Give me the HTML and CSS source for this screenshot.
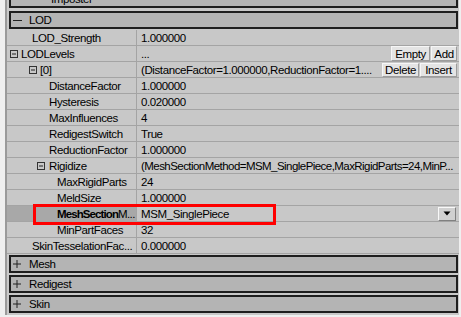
FILE: index.html
```html
<!DOCTYPE html>
<html>
<head>
<meta charset="utf-8">
<link rel="stylesheet" href="styles.css">
</head>
<body>
<div class="window">
  <div class="panel">
    <div class="cat cat-cut"><span class="cat-text">Imposter</span></div>
    <div class="cat cat-lod">
      <svg class="cat-icon" width="10" height="9" viewBox="0 0 10 9"><line x1="1" y1="4.5" x2="10" y2="4.5" stroke="#222" stroke-width="1"/></svg>
      <span class="cat-text">LOD</span>
    </div>
    <div class="rows">
      <div class="row"><div class="name i1">LOD_Strength</div><div class="value">1.000000</div></div>
      <div class="row"><div class="name e1"><svg class="box" width="8" height="8" viewBox="0 0 8 8"><rect x="0.5" y="0.5" width="7" height="7" fill="none" stroke="#333"/><line x1="2" y1="4" x2="6" y2="4" stroke="#222"/></svg>LODLevels</div><div class="value"><span>...</span><span class="btns top"><span class="btn b-empty">Empty</span><span class="btn b-add">Add</span></span></div></div>
      <div class="row"><div class="name e2"><svg class="box" width="8" height="8" viewBox="0 0 8 8"><rect x="0.5" y="0.5" width="7" height="7" fill="none" stroke="#333"/><line x1="2" y1="4" x2="6" y2="4" stroke="#222"/></svg>[0]</div><div class="value"><span>(DistanceFactor=1.000000,ReductionFactor=1....</span><span class="btns bottom"><span class="btn b-delete">Delete</span><span class="btn b-insert">Insert</span></span></div></div>
      <div class="row"><div class="name i2">DistanceFactor</div><div class="value">1.000000</div></div>
      <div class="row"><div class="name i2">Hysteresis</div><div class="value">0.020000</div></div>
      <div class="row"><div class="name i2">MaxInfluences</div><div class="value">4</div></div>
      <div class="row"><div class="name i2">RedigestSwitch</div><div class="value">True</div></div>
      <div class="row"><div class="name i2">ReductionFactor</div><div class="value">1.000000</div></div>
      <div class="row"><div class="name e3"><svg class="box" width="8" height="8" viewBox="0 0 8 8"><rect x="0.5" y="0.5" width="7" height="7" fill="none" stroke="#333"/><line x1="2" y1="4" x2="6" y2="4" stroke="#222"/></svg>Rigidize</div><div class="value"><span class="tight">(MeshSectionMethod=MSM_SinglePiece,MaxRigidParts=24,MinP...</span></div></div>
      <div class="row"><div class="name i3">MaxRigidParts</div><div class="value">24</div></div>
      <div class="row"><div class="name i3">MeldSize</div><div class="value">1.000000</div></div>
      <div class="row selected"><div class="name i3"><b>MeshSection</b>M...</div><div class="value"><span>MSM_SinglePiece</span><span class="drop"><svg width="8" height="5" viewBox="0 0 8 5"><polygon points="0.5,0.5 7.5,0.5 4,4.5" fill="#000"/></svg></span></div></div>
      <div class="row"><div class="name i3">MinPartFaces</div><div class="value">32</div></div>
      <div class="row"><div class="name i1">SkinTesselationFac...</div><div class="value">0.000000</div></div>
    </div>
    <div class="cat cat-first">
      <svg class="cat-icon" width="10" height="10" viewBox="0 0 10 10"><line x1="1" y1="5" x2="9" y2="5" stroke="#222"/><line x1="5" y1="1" x2="5" y2="9" stroke="#222"/></svg>
      <span class="cat-text">Mesh</span>
    </div>
    <div class="cat">
      <svg class="cat-icon" width="10" height="10" viewBox="0 0 10 10"><line x1="1" y1="5" x2="9" y2="5" stroke="#222"/><line x1="5" y1="1" x2="5" y2="9" stroke="#222"/></svg>
      <span class="cat-text">Redigest</span>
    </div>
    <div class="cat">
      <svg class="cat-icon" width="10" height="10" viewBox="0 0 10 10"><line x1="1" y1="5" x2="9" y2="5" stroke="#222"/><line x1="5" y1="1" x2="5" y2="9" stroke="#222"/></svg>
      <span class="cat-text">Skin</span>
    </div>
  </div>
  <div class="highlight"></div>
</div>
</body>
</html>
```
FILE: styles.css
```css
* { box-sizing: border-box; }
html, body { margin: 0; padding: 0; }
body {
  background: #efefef;
  font-family: "Liberation Sans", Arial, sans-serif;
  font-size: 11.5px;
  letter-spacing: -0.4px;
  color: #000;
  overflow: hidden;
}
.window {
  position: relative;
  width: 461px;
  height: 317px;
  padding-left: 5px;
}
.panel {
  width: 454px;
  height: 315px;
  background: #c8c8c8;
  border-left: 2px solid #9a9a9a;
  overflow: hidden;
}
.cat {
  height: 18px;
  margin: 2px 1px 0 2px;
  background: #b4b4b4;
  border: 2px solid #1e1e1e;
  display: flex;
  align-items: center;
  line-height: 14px;
}
.cat-cut { margin-top: -10px; }
.cat-lod { margin-top: 3px; margin-bottom: 1px; }
.cat-first { margin-top: 1px; }
.cat-icon { margin-left: 1px; flex: none; }
.cat-text { margin-left: 7px; }
.cat-cut .cat-text { margin-left: 40px; }

.rows { display: flex; flex-direction: column; }
.row {
  height: 16px;
  display: flex;
  border-bottom: 1px solid #a4a4a4;
}
.name {
  width: 130px;
  flex: none;
  border-right: 1px solid #a4a4a4;
  display: flex;
  align-items: center;
  white-space: nowrap;
  overflow: hidden;
}
.value {
  flex: 1;
  min-width: 0;
  display: flex;
  align-items: center;
  padding-left: 4px;
  white-space: nowrap;
  position: relative;
}
.tight { letter-spacing: -0.55px; }
.i1 { padding-left: 25px; }
.i2 { padding-left: 42px; }
.i3 { padding-left: 50px; }
.e1 { padding-left: 3px; }
.e2 { padding-left: 22px; }
.e3 { padding-left: 30px; }
.box { flex: none; margin-right: 3px; }
.e3 .box { margin-right: 4px; }

.selected .name { background: #a8a8a8; letter-spacing: -0.6px; }
.selected b { font-weight: bold; letter-spacing: -0.9px; }

.btns { margin-left: auto; margin-right: 2px; display: flex; gap: 1px; }
.btns.top { height: 15px; align-self: flex-start; }
.btns.bottom { height: 14px; margin-top: 1px; align-self: flex-start; }
.btn {
  background: #e4e4e4;
  border: 1px solid #9c9c9c;
  border-top-color: #f6f6f6;
  border-left-color: #f6f6f6;
  display: flex;
  align-items: center;
  justify-content: center;
  line-height: 12px;
}
.b-empty { width: 39px; }
.b-add { width: 26px; }
.b-delete { width: 37px; }
.b-insert { width: 37px; }

.drop {
  margin-left: auto;
  margin-right: 3px;
  width: 18px;
  height: 14px;
  background: #d0d0d0;
  border: 1px solid #f8f8f8;
  border-right-color: #808080;
  border-bottom-color: #808080;
  display: flex;
  align-items: center;
  justify-content: center;
}

.highlight {
  position: absolute;
  left: 33px;
  top: 204px;
  width: 243px;
  height: 21px;
  border: 3px solid #ff0000;
}
```
